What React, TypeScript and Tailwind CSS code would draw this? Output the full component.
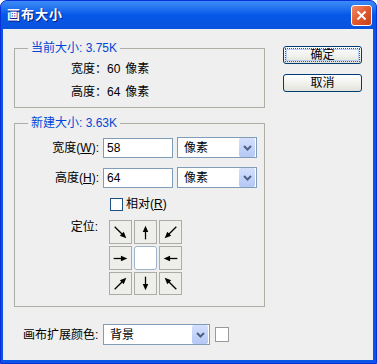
import React from "react";

const FONT = "font-['Liberation_Sans','Noto_Sans_CJK_SC',sans-serif]";

function Arrow({ angle, len }: { angle: number; len: number }) {
  const c = 11.5;
  const x1 = c - len / 2;
  const x2 = c + len / 2;
  return (
    <svg width="23" height="23" viewBox="0 0 23 23">
      <g transform={`rotate(${angle} ${c} ${c})`}>
        <line x1={x1} y1={c} x2={x2 - 4} y2={c} stroke="#000" strokeWidth="1.4" />
        <polygon points={`${x2 - 7},${c - 3} ${x2},${c} ${x2 - 7},${c + 3}`} fill="#000" />
      </g>
    </svg>
  );
}

function Chevron() {
  return (
    <svg width="9" height="6" viewBox="0 0 9 6">
      <path d="M1 1 L4.5 4.5 L8 1" fill="none" stroke="#4d6185" strokeWidth="2" />
    </svg>
  );
}

function Select({ value, width }: { value: string; width: string }) {
  return (
    <div
      className={`${width} h-[21px] flex items-center border border-[#7f9db9] bg-white`}
    >
      <span className="flex-1 pl-[6px] text-[12px] leading-[14px]">{value}</span>
      <div className="w-[16px] h-[19px] mr-px flex items-center justify-center rounded-[2px] bg-gradient-to-b from-[#d4e0fc] to-[#b4c8f6]">
        <Chevron />
      </div>
    </div>
  );
}

function XpButton({ label, isDefault }: { label: string; isDefault?: boolean }) {
  return (
    <button className="w-[79px] h-[18px] rounded-[3px] border border-[#003c74] bg-gradient-to-b from-white to-[#e3e3dc] p-px">
      <div
        className={`h-full flex items-center justify-center text-[12px] leading-[14px] ${
          isDefault ? "border border-dotted border-[#555] shadow-[inset_0_0_0_1px_#b8d0f5]" : ""
        }`}
      >
        {label}
      </div>
    </button>
  );
}

const CELLS: { angle?: number; len?: number }[] = [
  { angle: 45, len: 18 },
  { angle: -90, len: 15 },
  { angle: 135, len: 18 },
  { angle: 0, len: 15 },
  {},
  { angle: 180, len: 15 },
  { angle: -45, len: 18 },
  { angle: 90, len: 15 },
  { angle: -135, len: 18 },
];

export default function App() {
  return (
    <div className={`${FONT} w-[377px] h-[364px] flex flex-col rounded-t-[7px] bg-[#0a55e6] border border-[#0831d9] text-black`}>
      {/* title bar */}
      <div className="h-[28px] flex items-center pl-[6px] pr-[4px] rounded-t-[6px] bg-gradient-to-b from-[#3d8cf7] via-[#0558e7] to-[#0a52dd]">
        <span className="text-[13px] font-bold text-white tracking-[1px] [text-shadow:1px_1px_0_#0a1883]">
          画布大小
        </span>
        <button className="ml-auto w-[21px] h-[21px] flex items-center justify-center rounded-[3px] border border-white bg-gradient-to-br from-[#f08a68] via-[#e2582d] to-[#c8401a]">
          <svg width="11" height="11" viewBox="0 0 11 11">
            <path d="M1.5 1.5 L9.5 9.5 M9.5 1.5 L1.5 9.5" stroke="#fff" strokeWidth="2" />
          </svg>
        </button>
      </div>

      {/* client */}
      <div className="flex-1 ml-[2px] mr-[3px] mb-[3px] bg-[#efefef] flex">
        <div className="flex flex-col pl-[11px] pt-[12px]">
          <fieldset className="w-[251px] border border-[#aeaea6] pb-[8px]">
            <legend className="ml-[13px] px-[3px] text-[12px] leading-[14px] text-[#0046d5]">
              当前大小: 3.75K
            </legend>
            <div className="mt-[7px] pl-[56px] flex flex-col gap-[9px] text-[12px] leading-[14px]">
              <div className="flex">
                <span className="w-[36px]">宽度：</span>
                <span>60</span>
                <span className="ml-[5px]">像素</span>
              </div>
              <div className="flex">
                <span className="w-[36px]">高度：</span>
                <span>64</span>
                <span className="ml-[5px]">像素</span>
              </div>
            </div>
          </fieldset>

          <fieldset className="mt-[8px] w-[251px] border border-[#aeaea6] pb-[11px]">
            <legend className="ml-[13px] px-[3px] text-[12px] leading-[14px] text-[#0046d5]">
              新建大小: 3.63K
            </legend>
            <div className="mt-[7px] flex flex-col text-[12px] leading-[14px]">
              <div className="flex items-center gap-[4px]">
                <span className="w-[84px] text-right">
                  宽度(<span className="underline">W</span>):
                </span>
                <div className="w-[70px] h-[20px] flex items-center border border-[#7f9db9] bg-white pl-[3px]">58</div>
                <Select value="像素" width="w-[80px]" />
              </div>
              <div className="mt-[9px] flex items-center gap-[4px]">
                <span className="w-[84px] text-right">
                  高度(<span className="underline">H</span>):
                </span>
                <div className="w-[70px] h-[20px] flex items-center border border-[#7f9db9] bg-white pl-[3px]">64</div>
                <Select value="像素" width="w-[80px]" />
              </div>
              <div className="mt-[9px] ml-[95px] flex items-center gap-[3px]">
                <div className="w-[13px] h-[13px] border border-[#1c5180] bg-white" />
                <span>
                  相对(<span className="underline">R</span>)
                </span>
              </div>
              <div className="mt-[9px] flex items-start">
                <span className="w-[83px] text-right">定位:</span>
                <div className="ml-[11px] grid grid-cols-[23px_23px_23px] grid-rows-[24px_24px_23px] gap-[2px]">
                  {CELLS.map((c, i) =>
                    c.angle === undefined ? (
                      <div key={i} className="rounded-[3px] border border-[#9eb3cc] bg-white" />
                    ) : (
                      <div
                        key={i}
                        className="flex items-center justify-center border border-[#acaca4] bg-[#eeeeea]"
                      >
                        <Arrow angle={c.angle} len={c.len!} />
                      </div>
                    )
                  )}
                </div>
              </div>
            </div>
          </fieldset>

          <div className="mt-[17px] pl-[9px] flex items-center text-[12px] leading-[14px]">
            <span className="w-[80px]">画布扩展颜色:</span>
            <Select value="背景" width="w-[107px]" />
            <div className="ml-[5px] w-[14px] h-[15px] border border-[#9a9a9a] bg-white" />
          </div>
        </div>

        <div className="ml-[18px] pt-[17px] flex flex-col gap-[10px]">
          <XpButton label="确定" isDefault />
          <XpButton label="取消" />
        </div>
      </div>
    </div>
  );
}
